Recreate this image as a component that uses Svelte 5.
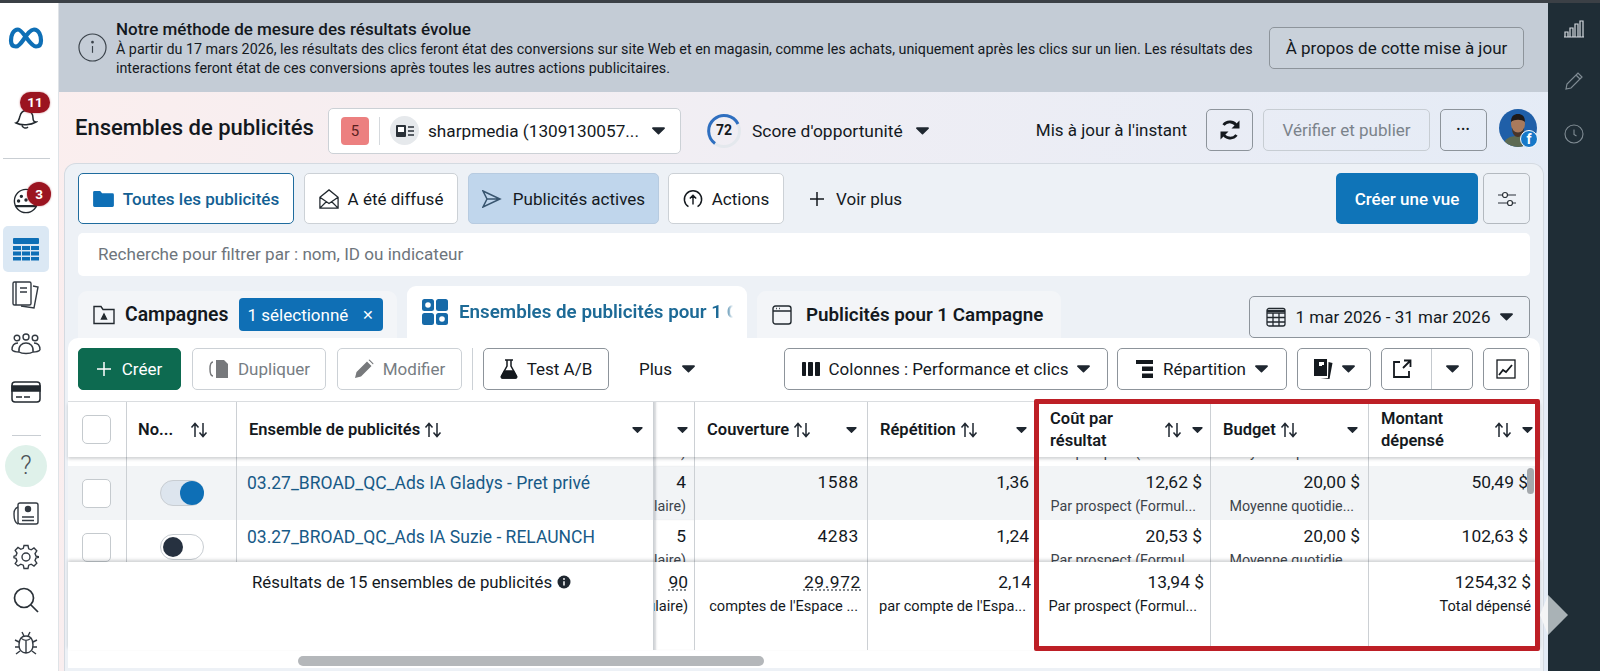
<script>
  const rows = [
    { clip: 'top', on: false, name: '03.27_BROAD_QC_Ads IA Marie', res: '3', reach: '2104', rep: '1,18', cost: '18,40 $', budget: '20,00 $', spent: '55,20 $' },
    { clip: '', on: true, name: '03.27_BROAD_QC_Ads IA Gladys - Pret privé', res: '4', reach: '1588', rep: '1,36', cost: '12,62 $', budget: '20,00 $', spent: '50,49 $' },
    { clip: '', on: false, name: '03.27_BROAD_QC_Ads IA Suzie - RELAUNCH', res: '5', reach: '4283', rep: '1,24', cost: '20,53 $', budget: '20,00 $', spent: '102,63 $' }
  ];
</script>

{#snippet caret()}
  <svg class="caret" viewBox="0 0 14 8" width="13" height="8"><path d="M1 0h12a1 1 0 0 1 .7 1.6L7.6 7.6a.9.9 0 0 1-1.2 0L.3 1.6A1 1 0 0 1 1 0z" fill="#1f2730" /></svg>
{/snippet}

{#snippet sort()}
  <svg class="sort" viewBox="0 0 18 16" width="18" height="16" fill="none" stroke="#1f2730" stroke-width="1.5"><path d="M5 15V2M1.5 5.5 5 1.5l3.5 4M13 1v13M9.5 10.5l3.5 4 3.5-4" /></svg>
{/snippet}

<div class="page">
  <nav class="side">
    <div class="it meta">
      <svg viewBox="0 0 36 24" width="36" height="25" fill="none" stroke="#0e6fb6" stroke-width="4.2"><path d="M10 3C5 3 3 9 3 14c0 4 2 6 5 6 6 0 11-17 18-17 5 0 7 6 7 11 0 4-2 6-5 6C22 20 15 3 10 3z" /></svg>
    </div>
    <div class="it bell">
      <svg class="bell-ico" viewBox="0 0 24 22" width="24" height="22" fill="none" stroke="#22292f" stroke-width="1.5"><path d="M2 14c3-1 3-4 4-7 1-4 4-6 8-5s5 4 5 7c0 2 1 4 3 4-5 3-14 4-20 1zM8 16c0 3 4 4 6 2" /></svg>
      <span class="badge b11">11</span>
    </div>
    <hr class="h1" />
    <div class="it planet">
      <svg viewBox="0 0 28 28" width="26" height="26" fill="none" stroke="#22292f" stroke-width="1.5"><circle cx="14" cy="14" r="12.500" /><path d="M3 19.500h22" stroke-width="2.400" /><circle cx="9" cy="9" r="1.100" fill="#22292f" /><circle cx="14" cy="13" r="1.100" fill="#22292f" /><circle cx="6" cy="14" r="1.100" fill="#22292f" /></svg>
      <span class="badge b3">3</span>
    </div>
    <div class="it active">
      <svg viewBox="0 0 28 24" width="28" height="24" fill="#0e6fb6"><rect x="1" y="1" width="26" height="6" rx="1" /><rect x="1" y="9" width="8" height="4" /><rect x="10" y="9" width="8" height="4" /><rect x="19" y="9" width="8" height="4" /><rect x="1" y="14.5" width="8" height="4" /><rect x="10" y="14.5" width="8" height="4" /><rect x="19" y="14.5" width="8" height="4" /><rect x="1" y="20" width="8" height="3.5" /><rect x="10" y="20" width="8" height="3.5" /><rect x="19" y="20" width="8" height="3.5" /></svg>
    </div>
    <div class="it pages">
      <svg viewBox="0 0 30 30" width="30" height="30" fill="none" stroke="#333a42" stroke-width="1.4"><path d="M22 6l5 1-4 21-13-2" /><rect x="2" y="2" width="18" height="23" rx="1.5" fill="#fff" /><path d="M5 2v23M9 8h7M9 12h7" /></svg>
    </div>
    <div class="it people">
      <svg viewBox="0 0 30 22" width="30" height="22" fill="none" stroke="#333a42" stroke-width="1.4"><circle cx="6" cy="5" r="2.800" /><circle cx="15" cy="4" r="3" /><circle cx="24" cy="5" r="2.800" /><path d="M1 17c0-5 3-7 6-7M29 17c0-5-3-7-6-7M8 19c-1-6 3-9 7-9s8 3 7 9c-3 2-11 2-14 0zM1 17c1 1 4 2 7 2M29 17c-1 1-4 2-7 2" /></svg>
    </div>
    <div class="it card">
      <svg viewBox="0 0 30 22" width="30" height="22" fill="none" stroke="#22292f" stroke-width="1.5"><rect x="1" y="1" width="28" height="20" rx="3" /><rect x="1" y="5" width="28" height="5" fill="#22292f" /><path d="M5 16h6M13 16h6" /></svg>
    </div>
    <hr class="h2" />
    <div class="help">?</div>
    <div class="it news">
      <svg viewBox="0 0 26 24" width="26" height="24" fill="none" stroke="#333a42" stroke-width="1.4"><rect x="5" y="1" width="20" height="21" rx="2" /><path d="M5 5C2 6 1 8 1 12c0 5 1 9 4 10M9 15h12M9 18.500h12" /><circle cx="15" cy="7" r="2.500" fill="#333a42" /></svg>
    </div>
    <div class="it gear">
      <svg viewBox="0 0 26 26" width="26" height="26" fill="none" stroke="#333a42" stroke-width="1.4"><circle cx="13" cy="13" r="4" /><path d="M11 1.500h4l.7 3.300 2.500 1 2.800-1.800 2.800 2.800-1.800 2.800 1 2.500 3.300.7v.4l-3.300.7-1 2.500 1.800 2.800-2.800 2.800-2.800-1.800-2.500 1-.7 3.300h-4l-.7-3.300-2.500-1-2.800 1.800L2.200 19.700 4 16.900l-1-2.500-2-.6v-1.600l2-.6 1-2.500-1.800-2.800L5 3.500l2.800 1.800 2.500-1z" /></svg>
    </div>
    <div class="it search">
      <svg viewBox="0 0 26 26" width="26" height="26" fill="none" stroke="#2a3138" stroke-width="1.7"><circle cx="11" cy="11" r="9.500" /><path d="M18 18l7 7" /></svg>
    </div>
    <div class="it bug">
      <svg viewBox="0 0 24 24" width="24" height="24" fill="none" stroke="#333a42" stroke-width="1.4"><path d="M12 5c-5 0-7 4-7 9s3 8 7 8 7-3 7-8-2-9-7-9zM7 7c3 3 7 3 10 0M12 9v13M8 1l2 4M16 1l-2 4M5 11L1 9M19 11l4-2M5 16H1M19 16h4M6 20l-4 3M18 20l4 3" /></svg>
    </div>
  </nav>

  <main class="main">
    <section class="banner">
      <svg class="info" viewBox="0 0 30 30" width="29" height="29" fill="none" stroke="#3a424a" stroke-width="1.2"><circle cx="15" cy="15" r="14" /><path d="M15 13.500v7" /><circle cx="15" cy="9.500" r=".8" fill="#3a424a" /></svg>
      <div class="banner-text">
        <strong>Notre méthode de mesure des résultats évolue</strong>
        <p>À partir du 17 mars 2026, les résultats des clics feront état des conversions sur site Web et en magasin, comme les achats, uniquement après les clics sur un lien. Les résultats des interactions feront état de ces conversions après toutes les autres actions publicitaires.</p>
      </div>
      <button class="btn about">À propos de cotte mise à jour</button>
    </section>

    <header class="top">
      <h1>Ensembles de publicités</h1>
      <div class="account">
        <span class="five">5</span>
        <span class="vsep"></span>
        <span class="acc-ico">
          <svg viewBox="0 0 18 12" width="18" height="12"><rect x="0" y="0" width="10" height="12" rx="1" fill="#2a3138" /><rect x="2" y="2" width="6" height="5" fill="#fff" /><path d="M12 2h6M12 6h6M12 10h6" stroke="#2a3138" stroke-width="1.400" /></svg>
        </span>
        <span class="acc-name">sharpmedia (1309130057...</span>
        {@render caret()}
      </div>
      <div class="score">
        <span class="gauge">
          <svg viewBox="0 0 36 36" width="36" height="36" fill="none" stroke-width="3"><circle cx="18" cy="18" r="15.500" stroke="#e4e8ed" /><path d="M9 30.500A15.500 15.500 0 1 1 32 11" stroke="#2f6fc0" /></svg>
          <b>72</b>
        </span>
        <span>Score d'opportunité</span>
        {@render caret()}
      </div>
      <div class="top-right">
        <span class="updated">Mis à jour à l'instant</span>
        <button class="btn sq">
          <svg viewBox="0 0 24 24" width="24" height="24" fill="none" stroke="#14191e" stroke-width="2.800"><path d="M19 8.500A8 8 0 0 0 5.500 7M5 15.500A8 8 0 0 0 18.500 17" /><path d="M21.500 2.500v8h-8zM2.500 21.500v-8h8z" stroke="none" fill="#14191e" /></svg>
        </button>
        <button class="btn publish">Vérifier et publier</button>
        <button class="btn sq dots">•••</button>
        <div class="avatar">
          <svg viewBox="0 0 38 38" width="38" height="38"><defs><clipPath id="av"><circle cx="19" cy="19" r="19" /></clipPath></defs><g clip-path="url(#av)"><rect width="38" height="38" fill="#1f5fa8" /><path d="M4 38c1-9 7-11 15-11s14 3 15 11z" fill="#5d6a52" /><ellipse cx="19" cy="15" rx="7" ry="9" fill="#a97a5c" /><path d="M12 13c0-6 3-8 7-8s7 2 7 8c-3-3-11-3-14 0z" fill="#1e1a18" /><path d="M13 19c2 6 10 6 12 0 0 6-3 9-6 9s-6-3-6-9z" fill="#4a3528" /></g></svg>
          <span class="fb">f</span>
        </div>
      </div>
    </header>

    <section class="panel">
      <div class="views">
        <button class="btn view sel">
          <svg viewBox="0 0 22 18" width="21" height="17" fill="#0e6fb6"><path d="M0 2.500A1.500 1.500 0 0 1 1.500 1h6l2 2.500h11A1.500 1.500 0 0 1 22 5v11.500a1.500 1.500 0 0 1-1.500 1.500h-19A1.500 1.500 0 0 1 0 16.500z" /></svg>
          Toutes les publicités
        </button>
        <button class="btn view two-w">
          <svg viewBox="0 0 22 22" width="20" height="20" fill="none" stroke="#22292f" stroke-width="1.400"><path d="M1 9l10-8 10 8v12H1zM1 9l10 7 10-7M1 21l7-7M21 21l-7-7" /></svg>
          A été diffusé
        </button>
        <button class="btn view act">
          <svg viewBox="0 0 20 18" width="20" height="18" fill="none" stroke="#38556f" stroke-width="1.500"><path d="M1 1l17 8-17 8 4-8zM5 9h13" /></svg>
          Publicités actives
        </button>
        <button class="btn view acts">
          <svg viewBox="0 0 22 22" width="20" height="20" fill="none" stroke="#14191e" stroke-width="1.600"><path d="M6 19.500A9.500 9.500 0 1 1 16 19.500M11 17V7M7.500 10.500 11 7l3.500 3.500" /></svg>
          Actions
        </button>
        <button class="more">
          <svg viewBox="0 0 14 14" width="14" height="14" stroke="#14191e" stroke-width="1.500"><path d="M7 0v14M0 7h14" /></svg>
          Voir plus
        </button>
        <button class="create-view">Créer une vue</button>
        <button class="btn sliders">
          <svg viewBox="0 0 20 16" width="20" height="16" fill="#fff" stroke="#2a3138" stroke-width="1.200"><path d="M1 4h18M1 12h18" /><circle cx="8" cy="4" r="2.500" /><circle cx="13" cy="12" r="2.500" /></svg>
        </button>
      </div>

      <div class="search-box">Recherche pour filtrer par : nom, ID ou indicateur</div>

      <div class="tabs">
        <div class="tab first">
          <svg viewBox="0 0 22 20" width="22" height="20" fill="none" stroke="#22292f" stroke-width="1.400"><path d="M1 18.500V1.500h7l2 3h11v14z" /><path d="M11 9l-2.500 5h5z" fill="#22292f" /></svg>
          <b>Campagnes</b>
          <span class="chip">1 sélectionné <i>✕</i></span>
        </div>
        <div class="tab on">
          <svg viewBox="0 0 26 26" width="26" height="26" fill="#176aa8"><rect x="0" y="0" width="12" height="12" rx="2.500" /><rect x="14" y="0" width="12" height="12" rx="2.500" /><rect x="0" y="14" width="12" height="12" rx="2.500" /><rect x="14" y="14" width="12" height="12" rx="2.500" /><circle cx="6" cy="6" r="2.800" fill="#fff" /><circle cx="20" cy="20" r="2.800" fill="#fff" /></svg>
          <b>Ensembles de publicités pour 1 Campagne</b>
        </div>
        <div class="tab third">
          <svg viewBox="0 0 20 20" width="20" height="20" fill="none" stroke="#22292f" stroke-width="1.400"><rect x="1" y="1" width="18" height="18" rx="2.500" /><path d="M1 6h18M4 3.500h.8M7 3.500h.8" /></svg>
          <b>Publicités pour 1 Campagne</b>
        </div>
        <button class="btn date">
          <svg viewBox="0 0 20 20" width="20" height="20" fill="none" stroke="#22292f" stroke-width="1.300"><rect x="1" y="1.500" width="18" height="17.500" rx="2" /><path d="M1 6h18M1 10.500h18M1 15h18M7 6v13M13 6v13" /><path d="M1 4h18" stroke-width="2" /></svg>
          <span>1 mar 2026 - 31 mar 2026</span>
          {@render caret()}
        </button>
      </div>

      <div class="card-box">
        <div class="toolbar">
          <button class="btn create">
            <svg viewBox="0 0 14 14" width="14" height="14" stroke="#fff" stroke-width="1.500"><path d="M7 0v14M0 7h14" /></svg>
            Créer
          </button>
          <button class="btn off dup">
            <svg viewBox="0 0 21 21" width="21" height="21" fill="#77797c"><path d="M8 1h8l4 4v14H8z" /><path d="M5 3C2.500 3 2 5 2 10s.5 7 3 7" fill="none" stroke="#77797c" stroke-width="1.500" /></svg>
            Dupliquer
          </button>
          <button class="btn off mod">
            <svg viewBox="0 0 20 20" width="20" height="20" fill="#77797c"><path d="M1 19l1.500-6L13 2.500l4.500 4.500L7 17.500zM14.500 1l1-.5 4 4-.5 1z" /></svg>
            Modifier
          </button>
          <span class="tsep"></span>
          <button class="btn ab">
            <svg viewBox="0 0 18 20" width="18" height="20" fill="none" stroke="#14191e" stroke-width="1.500"><path d="M5 1h8M7 1v6L1.500 17c-.5 1 0 2 1 2h13c1 0 1.500-1 1-2L11 7V1" /><path d="M4.500 12h9l3 6c0 .5-.5 1-1 1h-13c-.5 0-1-.5-1-1z" fill="#14191e" /></svg>
            Test A/B
          </button>
          <button class="plus">Plus {@render caret()}</button>
          <button class="btn cols">
            <svg viewBox="0 0 18 14" width="18" height="14" fill="#14191e"><rect x="0" y="0" width="4" height="14" rx=".8" /><rect x="6" y="0" width="5" height="14" rx=".8" /><rect x="13" y="0" width="5" height="14" rx=".8" /></svg>
            Colonnes : Performance et clics
            {@render caret()}
          </button>
          <button class="btn rep">
            <svg viewBox="0 0 18 18" width="18" height="18" fill="#14191e"><rect x="0" y="0" width="17" height="4" /><rect x="6" y="6.500" width="11" height="4.500" /><rect x="6" y="13.500" width="11" height="4.500" /></svg>
            Répartition
            {@render caret()}
          </button>
          <button class="btn rapport">
            <svg viewBox="0 0 20 22" width="20" height="22" fill="#14191e"><path d="M1 1h13v17H1z" /><path d="M15.500 4l4 1-3 16-9-1h7.500z" /><path d="M6 4h5v3H9v1H6z" fill="#fff" /></svg>
            {@render caret()}
          </button>
          <div class="btn split">
            <span>
              <svg viewBox="0 0 20 20" width="20" height="20" fill="none" stroke="#14191e" stroke-width="1.800"><path d="M8 3H2v15h15v-6M11 9l7-7M12 1.500h6.500V8" /></svg>
            </span>
            <span>{@render caret()}</span>
          </div>
          <button class="btn sq chart">
            <svg viewBox="0 0 20 20" width="20" height="20" fill="none" stroke="#14191e" stroke-width="1.300"><rect x="1" y="1" width="18" height="18" /><path d="M3 16l4-5 3 2 6-7" stroke-width="1.800" /></svg>
          </button>
        </div>

        <div class="tbl">
          <div class="line head">
            <div class="cell"><span class="check"></span></div>
            <div class="cell no"><b>No...</b>{@render sort()}</div>
            <div class="cell"><b>Ensemble de publicités</b>{@render sort()}<span class="end">{@render caret()}</span></div>
            <div class="cell edge"><span class="end">{@render caret()}</span></div>
            <div class="cell"><b>Couverture</b>{@render sort()}<span class="end">{@render caret()}</span></div>
            <div class="cell"><b>Répétition</b>{@render sort()}<span class="end">{@render caret()}</span></div>
            <div class="cell tight"><b class="two">Coût par résultat</b><span class="end">{@render sort()}{@render caret()}</span></div>
            <div class="cell"><b>Budget</b>{@render sort()}<span class="end">{@render caret()}</span></div>
            <div class="cell tight"><b class="two">Montant dépensé</b><span class="end">{@render sort()}{@render caret()}</span></div>
          </div>

          <div class="body">
            {#each rows as r, i}
              <div class="line row" class:clipped={r.clip === 'top'} class:tint={i === 1}>
                <div class="cell"><span class="check"></span></div>
                <div class="cell mid">
                  <span class="toggle" class:on={r.on}><i></i></span>
                </div>
                <div class="cell link-cell"><span class="link">{r.name}</span></div>
                <div class="cell num edge"><span>{r.res}</span><small class="cut">(Formulaire)</small></div>
                <div class="cell num wide"><span>{r.reach}</span></div>
                <div class="cell num"><span>{r.rep}</span></div>
                <div class="cell num"><span>{r.cost}</span><small>Par prospect (Formul...</small></div>
                <div class="cell num"><span>{r.budget}</span><small>Moyenne quotidie...</small></div>
                <div class="cell num"><span>{r.spent}</span></div>
              </div>
            {/each}
          </div>

          <div class="line total">
            <div class="cell blank"></div>
            <div class="cell"></div>
            <div class="cell sum">Résultats de 15 ensembles de publicités
              <svg viewBox="0 0 14 14" width="14" height="14"><circle cx="7" cy="7" r="6.500" fill="#1f2730" /><path d="M7 6.200v4.300" stroke="#fff" stroke-width="1.500" /><circle cx="7" cy="4" r=".9" fill="#fff" /></svg>
            </div>
            <div class="cell num edge"><span class="dotted">90</span><small class="cut">(Formulaire)</small></div>
            <div class="cell num wide"><span class="dotted">29.972</span><small>comptes de l'Espace ...</small></div>
            <div class="cell num rep-col"><span>2,14</span><small>par compte de l'Espa...</small></div>
            <div class="cell num cost-col"><span>13,94 $</span><small>Par prospect (Formul...</small></div>
            <div class="cell num"></div>
            <div class="cell num"><span>1254,32 $</span><small>Total dépensé</small></div>
          </div>

          <div class="vthumb"></div>
        </div>

        <div class="hscroll"><span></span></div>
        <div class="redbox"></div>
      </div>
    </section>
  </main>

  <aside class="dark">
    <svg viewBox="0 0 20 18" width="20" height="18" fill="none" stroke="#d5dadf" stroke-width="1.200"><path d="M1 17v-5h3v5M6 17V8h3v9M11 17V4h3v13M16 17V1h3v16zM0 17h20" /></svg>
    <svg viewBox="0 0 20 20" width="20" height="20" fill="none" stroke="#808c94" stroke-width="1.200"><path d="M2 18l1-5L14 2l4 4L7 17zM12 4l4 4" /></svg>
    <svg viewBox="0 0 20 20" width="20" height="20" fill="none" stroke="#808c94" stroke-width="1.100"><circle cx="10" cy="10" r="9" /><path d="M10 5.500v5l2.500 1.500" /></svg>
  </aside>
  <div class="pointer"></div>
</div>

<style>
  :global(body) {
    margin: 0;
    background: #fff;
  }

  .page {
    position: relative;
    display: grid;
    grid-template-columns: 59px 1fr 52px;
    width: 1600px;
    height: 671px;
    overflow: hidden;
    border-top: 3px solid #3b4046;
    box-sizing: border-box;
    font-family: Roboto, 'Liberation Sans', sans-serif;
    color: #14191e;
  }

  button {
    font: inherit;
    color: inherit;
    cursor: pointer;
  }

  /* left rail */
  .side {
    display: flex;
    flex-direction: column;
    align-items: flex-start;
    padding-left: 3px;
    background: #fff;
    border-right: 1px solid #dfe3e7;
    box-sizing: border-box;
  }

  .it {
    position: relative;
    display: flex;
    align-items: center;
    justify-content: center;
    width: 46px;
    height: 46px;
    flex: none;
  }

  .meta { margin-top: 12px; }
  .bell { margin-top: 31px; }
  .bell-ico { margin-top: 9px; }
  .planet { margin-top: 18px; }
  .planet svg { margin-top: 2px; }
  .active { margin-top: 3px; background: #dbe8f4; border-radius: 5px; }
  .people { margin-top: 3px; }
  .card { margin-top: 2px; }
  .news, .gear, .search, .bug { height: 40px; margin-top: 3px; }
  .news { margin-top: 7px; }

  hr {
    border: 0;
    height: 1px;
    background: #c9ced3;
    margin: 0;
    flex: none;
  }
  .h1 { width: 47px; margin-top: 20px; margin-left: 0; }
  .h2 { width: 29px; margin-top: 20px; margin-left: 9px; }

  .help {
    width: 42px;
    height: 42px;
    margin: 9px 0 0 2px;
    flex: none;
    border-radius: 50%;
    background: #dff1ea;
    color: #4b5259;
    font-size: 25px;
    font-weight: 300;
    line-height: 42px;
    text-align: center;
  }

  .badge {
    position: absolute;
    background: #9b1420;
    color: #fff;
    font-weight: 700;
    font-size: 13.5px;
    text-align: center;
    border-radius: 12px;
    box-shadow: 0 0 2px rgba(155, 20, 32, 0.6);
  }
  .b11 { left: 17px; top: 0; width: 30px; height: 21px; line-height: 21px; }
  .b3 { left: 24px; top: 5px; width: 24px; height: 24px; line-height: 24px; }

  /* main column */
  .main {
    display: flex;
    flex-direction: column;
    min-width: 0;
    background: linear-gradient(100deg, #fbeeee 0%, #f0eef4 45%, #e3ebf6 100%);
  }

  .banner {
    display: flex;
    align-items: center;
    height: 89px;
    flex: none;
    background: #c4ccd6;
    padding-left: 19px;
    box-sizing: border-box;
  }

  .info { flex: none; }

  .banner-text {
    width: 1140px;
    margin-left: 9px;
    font-size: 14.3px;
    line-height: 19px;
    color: #14191e;
  }
  .banner-text strong {
    display: block;
    font-size: 17px;
    font-weight: 500;
    line-height: 22px;
  }
  .banner-text p { margin: 0; }

  .btn {
    display: inline-flex;
    align-items: center;
    justify-content: center;
    box-sizing: border-box;
    background: #fff;
    border: 1px solid #8d949b;
    border-radius: 5px;
    font-size: 17px;
  }

  .about {
    width: 255px;
    height: 42px;
    margin-left: 13px;
    background: #c9d1da;
  }

  .top {
    display: flex;
    align-items: center;
    height: 71px;
    flex: none;
    padding-left: 16px;
    box-sizing: border-box;
  }

  h1 {
    width: 253px;
    margin: 0;
    font-size: 22px;
    font-weight: 500;
    white-space: nowrap;
  }

  .account {
    display: flex;
    align-items: center;
    width: 353px;
    height: 46px;
    margin-top: 6px;
    box-sizing: border-box;
    padding: 0 15px 0 12px;
    background: #fff;
    border: 1px solid #ccd1d6;
    border-radius: 5px;
    font-size: 17.2px;
  }
  .five {
    width: 28px;
    height: 28px;
    border-radius: 4px;
    background: #ec8080;
    color: #5a1f1f;
    line-height: 28px;
    text-align: center;
    font-size: 15px;
  }
  .vsep { width: 1px; height: 28px; background: #d5d9dd; margin: 0 10px; }
  .acc-ico {
    display: flex;
    align-items: center;
    justify-content: center;
    width: 29px;
    height: 29px;
    border-radius: 50%;
    background: #e6e9ec;
    margin-right: 9px;
  }
  .acc-name { white-space: nowrap; }
  .account .caret { margin-left: auto; }

  .score {
    display: flex;
    align-items: center;
    margin: 6px 0 0 25px;
    gap: 10px;
    font-size: 17.4px;
  }
  .score .caret { margin-left: 3px; }
  .gauge {
    position: relative;
    display: block;
    width: 36px;
    height: 36px;
  }
  .gauge b {
    position: absolute;
    inset: 0;
    font-size: 14px;
    font-weight: 700;
    line-height: 34px;
    text-align: center;
  }

  .top-right {
    display: flex;
    align-items: center;
    margin: 4px 0 0 auto;
    padding-right: 11px;
    gap: 10px;
  }
  .updated { font-size: 17px; margin-right: 9px; }
  .sq { width: 47px; height: 42px; background: transparent; }
  .publish {
    width: 167px;
    height: 42px;
    color: #7b838b;
    background: transparent;
    border-color: #c7cdd3;
  }
  .dots { font-size: 11px; letter-spacing: 1px; }
  .avatar { position: relative; width: 38px; height: 38px; margin: -4px 0 0 2px; }
  .avatar svg { display: block; }
  .fb {
    position: absolute;
    right: -1px;
    bottom: -1px;
    width: 16px;
    height: 16px;
    border-radius: 50%;
    background: #1778c8;
    border: 1px solid #fff;
    color: #fff;
    font-size: 14px;
    font-weight: 700;
    line-height: 17px;
    text-align: center;
  }

  .panel {
    flex: 1;
    min-height: 0;
    margin: 0 4px 0 5px;
    padding: 9px 13px 0 13px;
    background: #edf1f6;
    border: 1px solid #d4dae1;
    border-bottom: 0;
    border-radius: 12px 12px 0 0;
    box-sizing: border-box;
  }

  .views {
    display: flex;
    gap: 10px;
    height: 51px;
  }
  .view {
    gap: 9px;
    border-color: #ccd1d6;
  }
  .view.sel {
    width: 216px;
    border-color: #1f6c9e;
    color: #135f93;
    font-weight: 500;
  }
  .two-w { width: 154px; }
  .view.act { width: 191px; background: #c0d6ec; border-color: #b7cbe0; gap: 11px; }
  .view.acts { width: 116px; margin-left: -1px; }
  .more {
    display: inline-flex;
    align-items: center;
    gap: 12px;
    background: none;
    border: 0;
    margin-left: 10px;
    font-size: 17px;
  }
  .create-view {
    width: 142px;
    margin-left: auto;
    background: #0f74b8;
    border: 0;
    border-radius: 5px;
    color: #fff;
    font-size: 17px;
    font-weight: 500;
  }
  .sliders { width: 47px; background: transparent; border-color: #b3b9bf; margin-left: -5px; }

  .search-box {
    height: 43px;
    margin-top: 9px;
    padding-left: 20px;
    background: #fff;
    border-radius: 5px;
    color: #6e757c;
    font-size: 17.1px;
    line-height: 43px;
  }

  .tabs {
    display: flex;
    align-items: flex-end;
    height: 52px;
    margin-top: 10px;
    gap: 10px;
  }
  .tab {
    display: flex;
    align-items: center;
    box-sizing: border-box;
    height: 47px;
    background: #f3f5f8;
    border-radius: 9px 9px 0 0;
    overflow: hidden;
    white-space: nowrap;
    font-size: 18.8px;
  }
  .tab b { font-weight: 600; }
  .first { width: 319px; padding-left: 15px; gap: 10px; }
  .first b { font-size: 19.4px; }
  .chip {
    display: flex;
    align-items: center;
    justify-content: space-between;
    width: 144px;
    height: 33px;
    box-sizing: border-box;
    padding: 0 9px;
    background: #0f6fb5;
    border-radius: 4px;
    color: #fff;
    font-size: 17px;
  }
  .chip i { font-style: normal; font-size: 14px; }
  .tab.on {
    width: 340px;
    height: 52px;
    padding-left: 15px;
    gap: 11px;
    background: #fff;
    color: #1d6a96;
    position: relative;
  }
  .tab.on b {
    display: block;
    width: 274px;
    overflow: hidden;
    -webkit-mask-image: linear-gradient(90deg, #000 97%, transparent);
    mask-image: linear-gradient(90deg, #000 97%, transparent);
  }
  .third { width: 304px; padding-left: 15px; gap: 14px; }
  .date {
    width: 281px;
    height: 42px;
    margin: 0 0 0 auto;
    gap: 10px;
    background: transparent;
    align-self: flex-end;
  }

  .card-box {
    position: relative;
    margin: 0 -10px 0 -10px;
    height: 330px;
    background: #fff;
    border-radius: 10px 10px 0 0;
    z-index: 1;
  }

  .toolbar {
    display: flex;
    align-items: center;
    height: 42px;
    padding: 10px 11px 0 10px;
    gap: 11px;
  }
  .toolbar .btn { height: 42px; gap: 9px; }
  .create {
    width: 103px;
    background: #0d6a50;
    border-color: #0d6a50 !important;
    color: #fff;
    gap: 11px !important;
  }
  .off { color: #777d83; border-color: #ccd1d6; }
  .dup { width: 134px; }
  .mod { width: 125px; }
  .tsep { width: 1px; height: 42px; background: #ccd1d6; margin: 0 -1px; }
  .ab { width: 126px; }
  .plus {
    display: inline-flex;
    align-items: center;
    gap: 10px;
    margin: 0 auto 0 19px;
    padding: 0;
    background: none;
    border: 0;
    font-size: 17px;
    flex: none;
  }
  .cols { width: 324px; }
  .rep { width: 170px; margin-left: -2px; }
  .rapport { width: 74px; margin-left: -1px; }
  .split { width: 92px; margin-left: -1px; }
  .split span {
    display: flex;
    align-items: center;
    justify-content: center;
    flex: 1;
    height: 100%;
  }
  .split span + span { border-left: 1px solid #c4c9ce; }
  .chart { width: 46px !important; margin-left: -1px; }

  /* table */
  .tbl {
    position: relative;
    margin-top: 11px;
    border-top: 1px solid #dde0e3;
  }
  .line {
    display: grid;
    grid-template-columns: 59px 110px 417px 41px 173px 170px 173px 158px 171px;
  }
  .cell {
    display: flex;
    align-items: center;
    min-width: 0;
    box-sizing: border-box;
    padding: 0 10px 0 8px;
    border-right: 1px solid #ccd0d4;
    white-space: nowrap;
  }
  .cell:last-child { border-right: 0; }

  .head {
    position: relative;
    z-index: 2;
    height: 55px;
    background: #fff;
    box-shadow: 0 2px 3px rgba(40, 50, 60, 0.22);
    font-size: 16.5px;
  }
  .head b { font-weight: 600; }
  .head .cell { gap: 4px; padding-left: 12px; }
  .head .cell:first-child { padding-left: 14px; }
  .head .no { gap: 17px; padding-left: 11px; }
  .head .edge { padding: 0 6px 0 0; }
  .head .tight { padding-right: 7px; }
  .head .caret { width: 11px; height: 6px; }
  .end {
    display: flex;
    align-items: center;
    gap: 10px;
    margin-left: auto;
  }
  .two {
    white-space: normal;
    width: 90px;
    line-height: 22px;
  }

  .check {
    display: block;
    width: 29px;
    height: 29px;
    flex: none;
    box-sizing: border-box;
    background: #fff;
    border: 1px solid #c5cace;
    border-radius: 5px;
  }

  .body {
    height: 105px;
    overflow: hidden;
  }
  .row {
    height: 54px;
    background: #fff;
  }
  .row.clipped { margin-top: -45px; }
  .row.tint { background: #f2f4f6; }
  .row .cell:first-child { padding-left: 14px; }
  .mid { justify-content: center; padding: 0; }
  .link-cell { align-items: flex-start; padding: 6px 0 0 10px; }
  .link { color: #185a87; font-size: 17.5px; line-height: 22px; }

  .toggle {
    position: relative;
    display: block;
    width: 44px;
    height: 26px;
    box-sizing: border-box;
    border: 1px solid #c8cdd2;
    border-radius: 13px;
    background: #fff;
  }
  .toggle i {
    position: absolute;
    left: 2px;
    top: 2px;
    width: 20px;
    height: 20px;
    border-radius: 50%;
    background: #263140;
  }
  .toggle.on { background: #dde5ee; }
  .toggle.on i {
    left: 19px;
    top: 0;
    width: 24px;
    height: 24px;
    background: #0e6fb6;
  }

  .num {
    flex-direction: column;
    align-items: flex-end;
    justify-content: flex-start;
    padding: 5px 8px 0 6px;
    font-size: 17.4px;
    line-height: 22px;
    overflow: hidden;
  }
  .num:last-child { padding-right: 12px; }
  .wide span { letter-spacing: 0.6px; }
  .num small {
    margin: 3px 6px 0 0;
    font-size: 14.3px;
    line-height: 20px;
    color: #3d444b;
  }
  .edge {
    box-shadow: inset 3px 0 2px -1px rgba(60, 70, 80, 0.22);
  }
  .num small.cut {
    direction: rtl;
    width: 35px;
    margin-right: 0;
    overflow: hidden;
  }

  .total {
    position: relative;
    z-index: 2;
    height: 88px;
    background: #fff;
    box-shadow: 0 -2px 3px rgba(40, 50, 60, 0.22);
  }
  .total .num { padding: 9px 6px 0 6px; }
  .total .num:last-child { padding-right: 9px; }
  .total .num small { margin-right: 0; font-size: 14.6px; }
  .total .wide small { margin-right: 3px; }
  .total .rep-col small { margin-right: 5px; }
  .total .cost-col small { margin-right: 7px; }
  .total .cell:nth-child(-n + 2) { border-right: 0; }
  .sum {
    align-items: flex-start;
    gap: 5px;
    padding: 9px 0 0 15px;
    font-size: 16.8px;
    line-height: 22px;
  }
  .sum svg { margin-top: 4px; }
  .total small { color: #14191e; }
  .dotted {
    text-decoration: underline dotted #5a6168;
    text-underline-offset: 2px;
  }

  .vthumb {
    position: absolute;
    right: 6px;
    top: 66px;
    width: 7px;
    height: 26px;
    z-index: 3;
    background: #a4a8ac;
    border-radius: 4px;
  }

  .hscroll {
    height: 10px;
    margin: 6px 0 0 230px;
  }
  .hscroll span {
    display: block;
    width: 466px;
    height: 10px;
    border-radius: 5px;
    background: #b4b7ba;
  }

  /* annotation drawn over the three money columns */
  .redbox {
    position: absolute;
    left: 966px;
    top: 61px;
    width: 506px;
    height: 252px;
    box-sizing: border-box;
    border: 5px solid #bd1f26;
    border-radius: 2px;
    z-index: 6;
  }

  /* right rail */
  .dark {
    display: flex;
    flex-direction: column;
    align-items: center;
    gap: 33px;
    padding-top: 17px;
    background: #1f2d36;
    z-index: 2;
  }

  .pointer {
    position: absolute;
    left: 1540px;
    top: 592px;
    width: 28px;
    height: 40px;
    background: linear-gradient(90deg, #f4f5f6 0 29%, #a9b2b6 29%);
    clip-path: polygon(0 50%, 29% 0, 100% 50%, 29% 100%);
    z-index: 5;
  }
</style>
